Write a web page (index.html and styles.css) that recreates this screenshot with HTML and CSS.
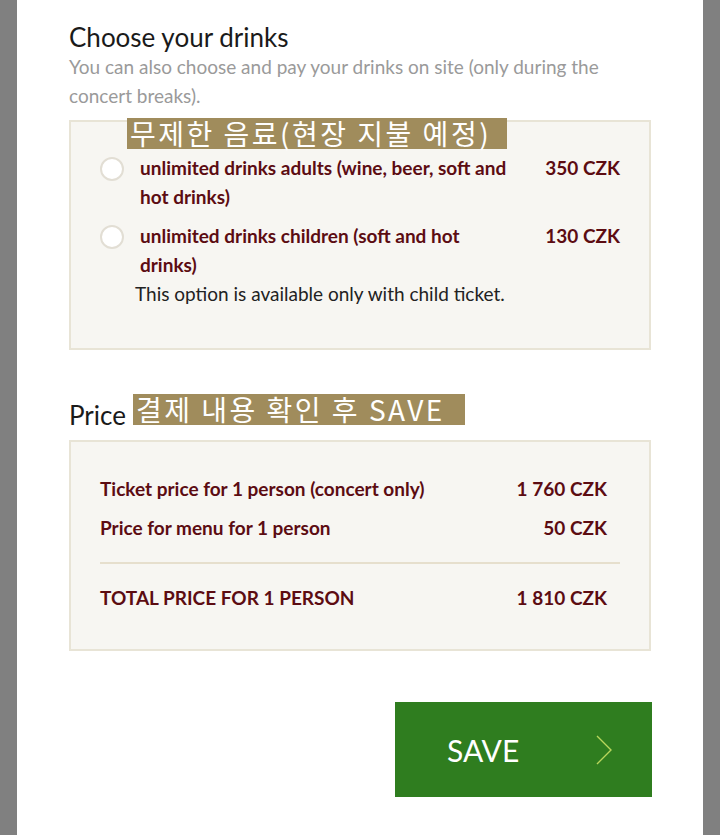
FILE: index.html
```html
<!DOCTYPE html>
<html lang="en">
<head>
    <meta charset="UTF-8">
    <meta name="viewport" content="width=device-width, initial-scale=1.0">
    <title>Choose your drinks</title>
    <link rel="stylesheet" href="styles.css">
</head>
<body>
    <div class="page">
        <h2 class="section-title">Choose your drinks</h2>
        <p class="section-note">You can also choose and pay your drinks on site (only during the concert breaks).</p>

        <div class="panel drinks">
            <span class="tag tag-drinks">무제한 음료(현장 지불 예정)</span>

            <label class="option">
                <span class="radio"></span>
                <span class="option-name">unlimited drinks adults (wine, beer, soft and hot drinks)</span>
                <span class="option-price">350 CZK</span>
            </label>
            <label class="option">
                <span class="radio"></span>
                <span class="option-name">unlimited drinks children (soft and hot drinks)</span>
                <span class="option-price">130 CZK</span>
            </label>
            <p class="option-hint">This option is available only with child ticket.</p>
        </div>

        <h2 class="section-title price-title">
            <span>Price</span>
            <span class="tag tag-price">결제 내용 확인 후 SAVE</span>
        </h2>

        <div class="panel summary">
            <div class="summary-row">
                <span>Ticket price for 1 person (concert only)</span>
                <span>1 760 CZK</span>
            </div>
            <div class="summary-row">
                <span>Price for menu for 1 person</span>
                <span>50 CZK</span>
            </div>
            <hr class="summary-line">
            <div class="summary-row total">
                <span>TOTAL PRICE FOR 1 PERSON</span>
                <span>1 810 CZK</span>
            </div>
        </div>

        <div class="actions">
            <button class="btn-save">
                <span>SAVE</span>
                <svg width="16" height="30" viewBox="0 0 16 30">
                    <path d="M1 1 L15 15 L1 29" fill="none" stroke="#b8d65c" stroke-width="1.4"/>
                </svg>
            </button>
        </div>
    </div>
</body>
</html>
```

FILE: styles.css
```css
body {
    margin: 0;
    background-color: #808080;
    font-family: Lato, 'Noto Sans', sans-serif;
}
.page {
    margin: 0 17px;
    min-height: 835px;
    background-color: #fff;
    padding: 22px 52px 40px 52px;
    box-sizing: border-box;
}
.section-title {
    margin: 0;
    font-size: 26px;
    font-weight: normal;
    line-height: 30px;
    color: #1a1a1a;
}
.section-note {
    margin: 0 0 10px 0;
    font-size: 19px;
    line-height: 29px;
    color: #9a9a9a;
}
.panel {
    position: relative;
    background-color: #f7f6f2;
    border: 2px solid #e8e4d6;
}
.tag {
    background-color: #a08c5c;
    color: #fff;
    font-family: 'Noto Sans CJK KR', sans-serif;
    font-size: 28px;
    letter-spacing: 2.5px;
    line-height: 31px;
    white-space: nowrap;
}
.tag-drinks {
    position: absolute;
    top: -4px;
    left: 56px;
    padding: 0 16px 0 3px;
}
.drinks {
    padding: 31px 29px 40px 29px;
}
.option {
    display: flex;
    align-items: flex-start;
    margin-bottom: 10px;
    font-size: 19px;
    line-height: 29px;
    font-weight: bold;
    color: #5c0c12;
}
.radio {
    flex: none;
    width: 20px;
    height: 20px;
    margin: 4px 16px 0 0;
    border: 2px solid #e2ded4;
    border-radius: 50%;
    background-color: #fff;
}
.option-name {
    width: 376px;
}
.option-price {
    margin-left: auto;
}
.option-hint {
    margin: -10px 0 0 35px;
    font-size: 19px;
    line-height: 29px;
    color: #222;
}
.price-title {
    display: flex;
    align-items: flex-start;
    gap: 7px;
    margin-top: 50px;
    margin-bottom: 10px;
}
.tag-price {
    margin-top: -6px;
    padding: 0 20px 0 3px;
}
.summary {
    padding: 32px 42px 37px 29px;
}
.summary-row {
    display: flex;
    justify-content: space-between;
    margin-bottom: 10px;
    font-size: 19px;
    line-height: 29px;
    font-weight: bold;
    color: #5c0c12;
}
.summary-row.total {
    margin-bottom: 0;
}
.summary-line {
    margin: 20px -13px 19px 0;
    border: none;
    border-top: 2px solid #e6dfcd;
}
.actions {
    display: flex;
    justify-content: flex-end;
    margin-top: 51px;
    margin-right: -1px;
}
.btn-save {
    display: flex;
    align-items: center;
    justify-content: space-between;
    width: 257px;
    height: 95px;
    padding: 0 40px 0 52px;
    border: none;
    background-color: #2f7d1f;
    color: #fff;
    font-family: Lato, sans-serif;
    font-size: 30px;
    cursor: pointer;
}
```
